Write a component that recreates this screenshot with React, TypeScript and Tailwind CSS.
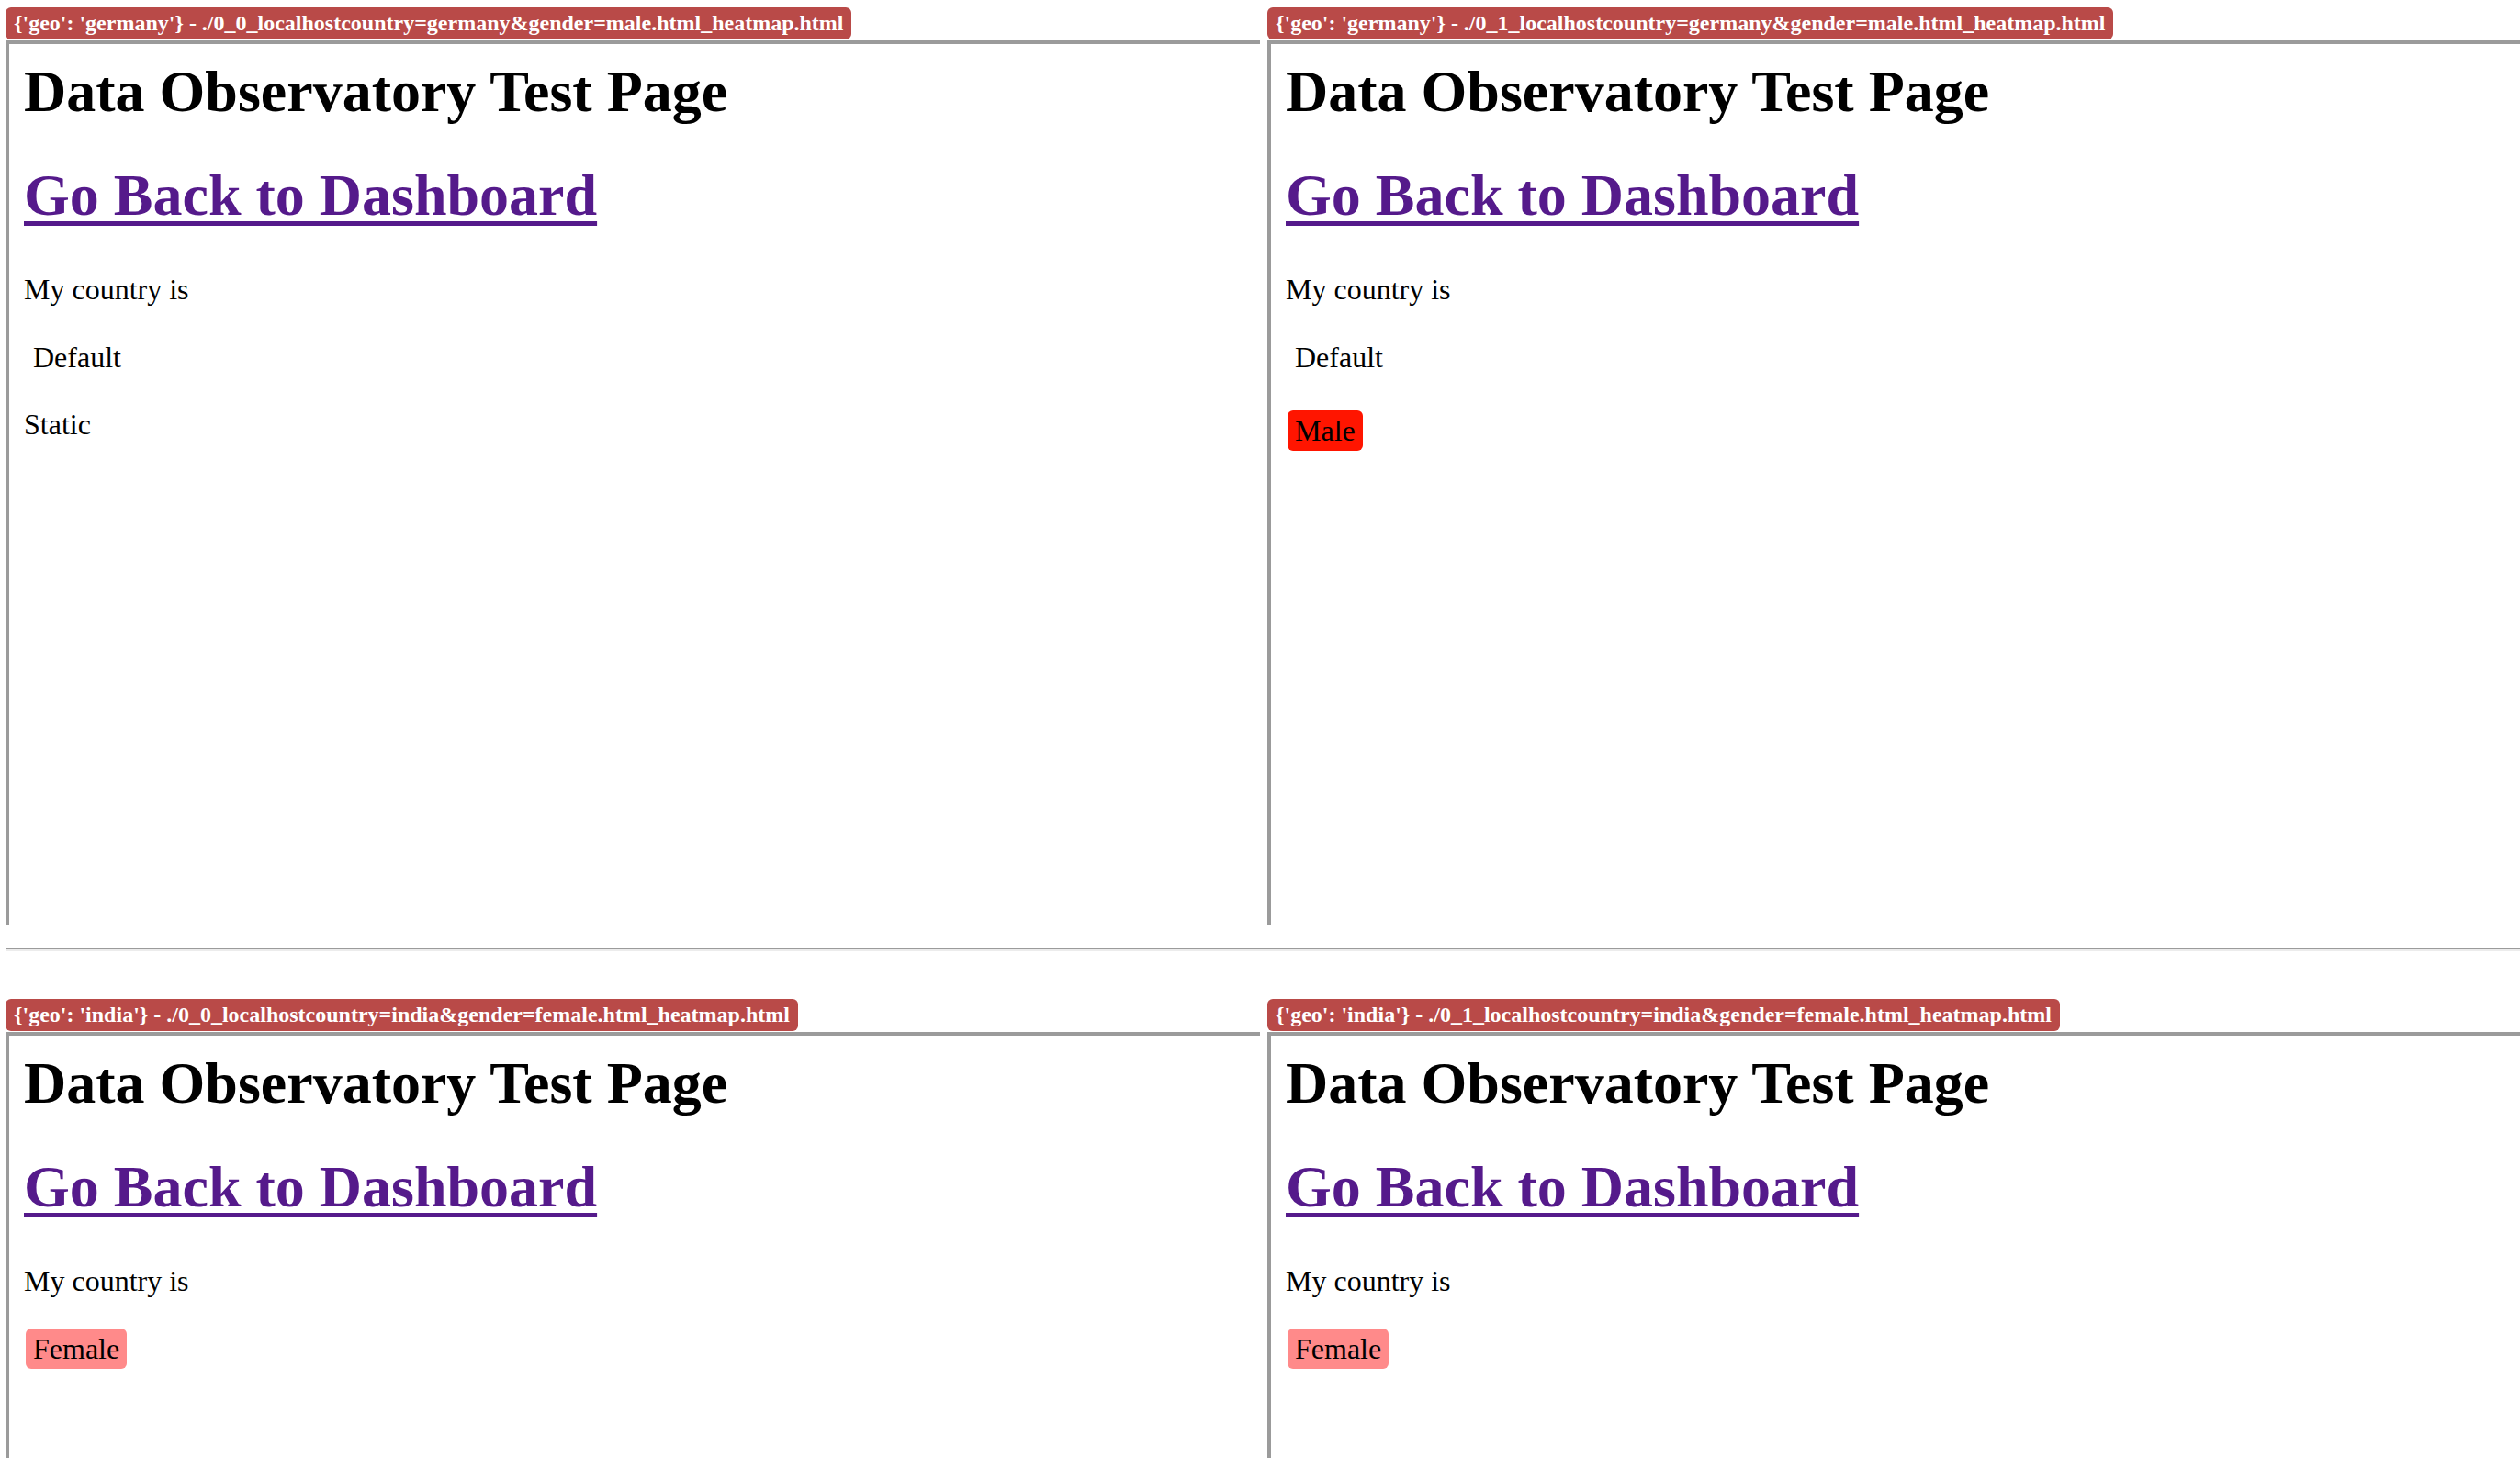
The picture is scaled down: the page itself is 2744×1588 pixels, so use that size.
type Frame = {
  label: string;
  country: string;
  countryBg?: string;
  gender?: 'static' | 'male';
};

const rows: Frame[][] = [
  [
    { label: "{'geo': 'germany'} - ./0_0_localhostcountry=germany&gender=male.html_heatmap.html", country: 'Default', gender: 'static' },
    { label: "{'geo': 'germany'} - ./0_1_localhostcountry=germany&gender=male.html_heatmap.html", country: 'Default', gender: 'male' },
  ],
  [
    { label: "{'geo': 'india'} - ./0_0_localhostcountry=india&gender=female.html_heatmap.html", country: 'Female', countryBg: 'bg-[#ff8a8a]' },
    { label: "{'geo': 'india'} - ./0_1_localhostcountry=india&gender=female.html_heatmap.html", country: 'Female', countryBg: 'bg-[#ff8a8a]' },
  ],
];

function Cell({ frame }: { frame: Frame }) {
  return (
    <div className="w-[1366px] shrink-0">
      <div className="mb-px inline-block rounded-[6px] bg-[#b94a48] px-[9px] pt-[3px] pb-[4px] text-[24px] leading-[28px] font-bold whitespace-nowrap text-white">
        {frame.label}
      </div>
      <div className="h-[963px] border-t-4 border-l-4 border-[#9b9b9b] bg-white pl-4">
        <h1 className="mt-[15px] text-[64px] leading-[74px] font-bold whitespace-nowrap text-black">Data Observatory Test Page</h1>
        <h1 className="mt-[39px] text-[64px] leading-[74px] font-bold whitespace-nowrap">
          <a href="#" className="text-[#551a8b] underline decoration-[5px] underline-offset-[7px]">
            Go Back to Dashboard
          </a>
        </h1>
        <p className="mt-[47px] text-[32px] leading-[37px] text-black">My country is</p>
        <div className={`mt-[33px] ml-[2px] w-fit rounded-[6px] px-2 py-1 text-[32px] leading-[36px] text-black ${frame.countryBg ?? ''}`}>
          {frame.country}
        </div>
        {frame.gender === 'static' && <p className="mt-[33px] text-[32px] leading-[37px] text-black">Static</p>}
        {frame.gender === 'male' && (
          <div className="mt-[36px] ml-[2px] w-fit rounded-[6px] bg-[#ff1500] px-2 py-1 text-[32px] leading-[36px] text-black">Male</div>
        )}
      </div>
    </div>
  );
}

export default function App() {
  return (
    <div className="h-[1588px] w-[2744px] overflow-hidden bg-white pt-2 pl-[6px] font-['Liberation_Serif',serif]">
      <div className="flex gap-[8px]">
        {rows[0].map((f) => (
          <Cell key={f.label} frame={f} />
        ))}
      </div>
      <hr className="mt-[25px] mb-[52px] border-t-2 border-b-2 border-t-[#9b9b9b] border-b-[#ececec]" />
      <div className="flex gap-[8px]">
        {rows[1].map((f) => (
          <Cell key={f.label} frame={f} />
        ))}
      </div>
    </div>
  );
}
